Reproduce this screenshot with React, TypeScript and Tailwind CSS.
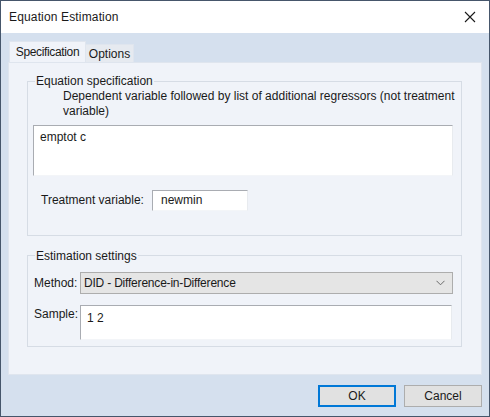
import React from "react";

export default function App() {
  const font = { fontFamily: '"Liberation Sans", Arial, sans-serif' };
  return (
    <div
      className="w-[490px] h-[417px] border border-[#46566b] flex flex-col text-[12px] leading-[15px] text-[#1a1a1a] overflow-hidden"
      style={font}
    >
      {/* Title bar */}
      <div className="h-[32px] bg-white flex items-center justify-between pl-[8px] pr-[12px] shrink-0">
        <span className="text-[12px] whitespace-nowrap tracking-[0.15px]">Equation Estimation</span>
        <svg width="12" height="12" viewBox="0 0 12 12" className="mr-[1px]">
          <path d="M1 1 L11 11 M11 1 L1 11" stroke="#1a1a1a" strokeWidth="1.1" />
        </svg>
      </div>

      {/* Body */}
      <div className="flex-1 bg-[#d5e0ee] pt-[8px] pl-[7px] flex flex-col">
        {/* Tabs */}
        <div className="flex items-end h-[21px]">
          <div className="ml-[1px] w-[77px] h-[21px] bg-[#f0f3f9] border border-b-0 border-[#dfe5ee] flex items-center justify-center relative z-10 whitespace-nowrap tracking-[-0.35px]">
            Specification
          </div>
          <div className="w-[48px] h-[18px] bg-[#e6eaf0] border border-b-0 border-l-0 border-[#dfe5ee] flex items-center justify-center whitespace-nowrap pt-[1px]">
            Options
          </div>
        </div>

        {/* Panel */}
        <div className="w-[474px] h-[313px] bg-[#f0f3f9] border border-[#dfe5ee] pl-[18px] pt-[18px]">
          {/* Group 1 */}
          <div className="w-[435px] h-[155px] border border-[#d6dce5] flex flex-col">
            <div className="-mt-[8px] ml-[7px] w-fit bg-[#f0f3f9] h-[15px] px-[1px] whitespace-nowrap">Equation specification</div>
            <div className="pl-[35px] whitespace-nowrap">
              Dependent variable followed by list of additional regressors (not treatment
              <br />
              variable)
            </div>
            <div className="mt-[6px] ml-[5px] w-[420px] h-[51px] bg-white border-t border-l border-[#a9acb2] border-r border-b border-r-[#e8ebef] border-b-[#f3f5f8] pl-[6px] pt-[4px]">
              emptot c
            </div>
            <div className="mt-[14px] h-[21px] flex items-center pl-[13px]">
              <span className="w-[111px] whitespace-nowrap">Treatment variable:</span>
              <div className="w-[96px] h-[21px] bg-white border-t border-l border-[#a9acb2] border-r border-b border-r-[#e8ebef] border-b-[#f3f5f8] flex items-center pl-[8px]">
                newmin
              </div>
            </div>
          </div>

          {/* Group 2 */}
          <div className="mt-[19px] w-[435px] h-[92px] border border-[#d6dce5] flex flex-col">
            <div className="-mt-[7px] ml-[7px] w-fit bg-[#f0f3f9] h-[15px] px-[1px] whitespace-nowrap">Estimation settings</div>
            <div className="mt-[8px] h-[22px] flex items-center pl-[6px]">
              <span className="w-[46px] whitespace-nowrap">Method:</span>
              <div className="w-[373px] h-[22px] bg-[#e5e5e5] border border-[#adadad] flex items-center justify-between pl-[3px] pr-[7px]">
                <span className="whitespace-nowrap tracking-[-0.2px]">DID - Difference-in-Difference</span>
                <svg width="9" height="6" viewBox="0 0 9 6">
                  <path d="M0.5 0.8 L4.5 4.8 L8.5 0.8" fill="none" stroke="#6b6b6b" strokeWidth="1" />
                </svg>
              </div>
            </div>
            <div className="mt-[11px] flex pl-[6px]">
              <span className="w-[46px] pt-[2px] whitespace-nowrap">Sample:</span>
              <div className="w-[372px] h-[35px] bg-white border-t border-l border-[#a9acb2] border-r border-b border-r-[#e8ebef] border-b-[#f3f5f8] pl-[6px] pt-[5px]">
                1 2
              </div>
            </div>
          </div>
        </div>

        {/* Buttons */}
        <div className="mt-[10px] w-[474px] flex justify-end gap-[8px]">
          <button className="w-[78px] h-[22px] bg-[#e1e1e1] border-2 border-[#0078d7] flex items-center justify-center">
            OK
          </button>
          <button className="w-[78px] h-[22px] bg-[#e1e1e1] border border-[#adadad] flex items-center justify-center">
            Cancel
          </button>
        </div>
      </div>
    </div>
  );
}
